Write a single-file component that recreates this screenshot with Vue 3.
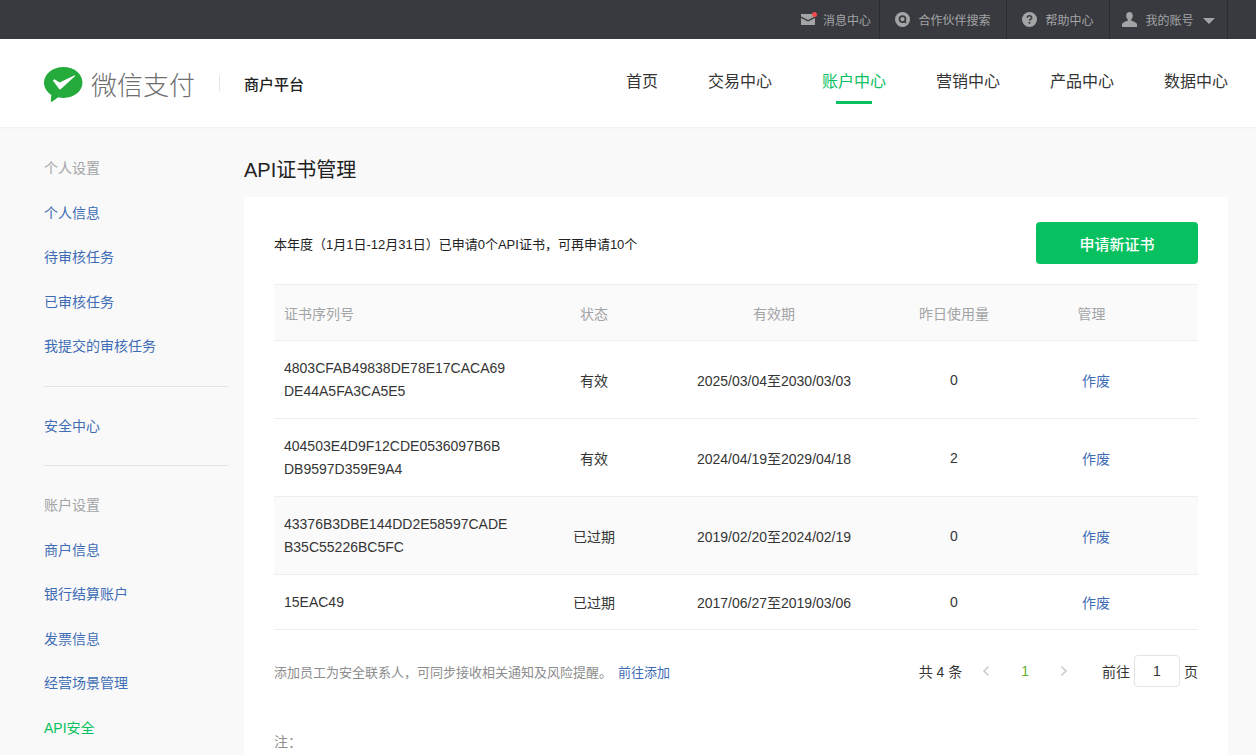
<template>
  <div class="page">
    <div class="topbar">
      <div v-for="item in topLinks" :key="item.label" class="top-link" :class="item.cls">
        <svg v-if="item.icon === 'mail'" class="top-icon mail" width="17" height="14" viewBox="0 0 17 14">
          <path d="M1 2h14v2.6L8 8 1 4.6z" fill="#a3a4a6" />
          <path d="M1 6l7 3.4L15 6v7H1z" fill="#a3a4a6" />
          <circle cx="14.5" cy="2.5" r="2.5" fill="#f4494b" />
        </svg>
        <svg v-else-if="item.icon === 'search'" class="top-icon" width="15" height="15" viewBox="0 0 15 15">
          <circle cx="7.5" cy="7.5" r="7.5" fill="#a3a4a6" />
          <circle cx="7.5" cy="7.2" r="3" fill="none" stroke="#393a3f" stroke-width="1.7" />
          <path d="M9.5 9.3l1.6 1.6" stroke="#393a3f" stroke-width="1.4" />
        </svg>
        <svg v-else-if="item.icon === 'help'" class="top-icon" width="15" height="15" viewBox="0 0 15 15">
          <circle cx="7.5" cy="7.5" r="7.5" fill="#a3a4a6" />
          <path d="M5.3 5.8c0-1.3 1-2.1 2.2-2.1s2.2.8 2.2 2c0 1.500-2.100 1.500-2.100 3.100" fill="none" stroke="#393a3f" stroke-width="1.500" />
          <rect x="6.600" y="10" width="1.700" height="1.700" fill="#393a3f" />
        </svg>
        <svg v-else class="top-icon" width="15" height="15" viewBox="0 0 15 15">
          <path d="M7.500 0c2.100 0 3.300 1.600 3.300 3.700 0 1.500-.6 2.800-1.500 3.600v1.400c2 .8 5.200 1.500 5.700 3.300v3H0v-3c.5-1.800 3.700-2.500 5.700-3.300V7.300C4.800 6.500 4.200 5.200 4.200 3.700 4.200 1.600 5.400 0 7.500 0z" fill="#a3a4a6" />
        </svg>
        <span>{{ item.label }}</span>
        <i v-if="item.caret" class="caret"></i>
      </div>
    </div>

    <header class="header">
      <div class="brand">
        <svg class="logo" width="39" height="35" viewBox="0 0 39 35">
          <path d="M19.500 0C30 0 38.500 6.800 38.500 15.600S30 31 19.500 31c-2 0-3.600-.2-5.300-.7L8 34.800c-.7.300-1.300-.1-1.200-.9l.5-5.900C2.800 25.200 0 20.700 0 15.600 0 6.800 9 0 19.500 0z" fill="#25ab3c" />
          <path d="M8.800 13.500l1.600-1.300 5.300 3.300L30.600 8.200l.6.800-14.300 13.100c-.6.500-1.300.4-1.700-.2z" fill="#fff" />
        </svg>
        <span class="brand-name">微信支付</span>
        <span class="brand-sep"></span>
        <span class="brand-sub">商户平台</span>
      </div>
      <nav class="nav">
        <a v-for="n in navs" :key="n" class="nav-item" :class="{ active: n === '账户中心' }">{{ n }}</a>
      </nav>
    </header>

    <div class="body">
      <aside class="side">
        <template v-for="(s, i) in sideItems" :key="i">
          <div v-if="s.type === 'line'" class="side-line"></div>
          <div v-else class="side-item" :class="s.type">{{ s.label }}</div>
        </template>
      </aside>

      <main class="main">
        <h1 class="title">API证书管理</h1>
        <section class="card">
          <div class="summary">
            <span>本年度（1月1日-12月31日）已申请0个API证书，可再申请10个</span>
            <button class="apply" type="button">申请新证书</button>
          </div>

          <div class="table">
            <div class="row head">
              <div class="c-sn">证书序列号</div>
              <div class="c-state">状态</div>
              <div class="c-date">有效期</div>
              <div class="c-num">昨日使用量</div>
              <div class="c-head-op">管理</div>
            </div>
            <div v-for="r in certs" :key="r.sn" class="row" :class="{ tall: r.sn.length > 10, expired: r.shade }">
              <div class="c-sn sn">{{ r.sn }}</div>
              <div class="c-state">{{ r.state }}</div>
              <div class="c-date">{{ r.date }}</div>
              <div class="c-num">{{ r.used }}</div>
              <div class="c-op"><a class="link">作废</a></div>
            </div>
          </div>

          <div class="foot">
            <div class="tip">添加员工为安全联系人，可同步接收相关通知及风险提醒。<a class="link add">前往添加</a></div>
            <div class="pager">
              <span class="total">共 4 条</span>
              <svg class="arrow" width="8" height="12" viewBox="0 0 8 12"><path d="M6.500 1.500L2 6l4.500 4.500" fill="none" stroke="#ccc" stroke-width="1.600" /></svg>
              <span class="cur">1</span>
              <svg class="arrow next" width="8" height="12" viewBox="0 0 8 12"><path d="M1.500 1.500L6 6l-4.500 4.500" fill="none" stroke="#ccc" stroke-width="1.600" /></svg>
              <span class="goto">前往</span>
              <span class="page-box">1</span>
              <span>页</span>
            </div>
          </div>

          <div class="note">注：</div>
        </section>
      </main>
    </div>
  </div>
</template>

<script setup>
const topLinks = [
  { label: "消息中心", icon: "mail", cls: "w-msg" },
  { label: "合作伙伴搜索", icon: "search", cls: "w-search" },
  { label: "帮助中心", icon: "help", cls: "w-help" },
  { label: "我的账号", icon: "user", cls: "w-user", caret: true },
];

const navs = ["首页", "交易中心", "账户中心", "营销中心", "产品中心", "数据中心"];

const sideItems = [
  { type: "group", label: "个人设置" },
  { type: "link", label: "个人信息" },
  { type: "link", label: "待审核任务" },
  { type: "link", label: "已审核任务" },
  { type: "link", label: "我提交的审核任务" },
  { type: "line" },
  { type: "link", label: "安全中心" },
  { type: "line" },
  { type: "group", label: "账户设置" },
  { type: "link", label: "商户信息" },
  { type: "link", label: "银行结算账户" },
  { type: "link", label: "发票信息" },
  { type: "link", label: "经营场景管理" },
  { type: "current", label: "API安全" },
];

const certs = [
  { sn: "4803CFAB49838DE78E17CACA69DE44A5FA3CA5E5", state: "有效", date: "2025/03/04至2030/03/03", used: 0 },
  { sn: "404503E4D9F12CDE0536097B6BDB9597D359E9A4", state: "有效", date: "2024/04/19至2029/04/18", used: 2 },
  { sn: "43376B3DBE144DD2E58597CADEB35C55226BC5FC", state: "已过期", date: "2019/02/20至2024/02/19", used: 0, shade: true },
  { sn: "15EAC49", state: "已过期", date: "2017/06/27至2019/03/06", used: 0 },
];
</script>

<style>
html, body {
  margin: 0;
  height: 755px;
  overflow: hidden;
  background: #f9f9f9;
}
</style>

<style scoped>
.page {
  font-family: "Liberation Sans", "Noto Sans CJK SC", sans-serif;
  font-size: 14px;
  color: #353535;
  background: #f9f9f9;
  height: 755px;
  overflow: hidden;
}
a { cursor: pointer; }

.topbar {
  height: 39px;
  background: #393a3f;
  display: flex;
  justify-content: flex-end;
  padding-right: 28px;
  color: #a3a4a6;
  font-size: 12px;
}
.top-link {
  display: flex;
  align-items: center;
  justify-content: center;
  border-right: 1px solid #2b2c30;
  box-sizing: border-box;
}
.top-link.w-msg { width: 88px; padding-left: 0; }
.top-link.w-search { width: 127px; }
.top-link.w-help { width: 103px; }
.top-link.w-user { width: 118px; }
.top-icon { margin-right: 8px; }
.top-icon.mail { margin-top: -2px; margin-right: 6px; }
.caret {
  width: 0;
  height: 0;
  margin-left: 9px;
  margin-top: 2px;
  border-left: 6px solid transparent;
  border-right: 6px solid transparent;
  border-top: 6px solid #a3a4a6;
}

.header {
  height: 88px;
  background: #fff;
  display: flex;
  align-items: center;
  justify-content: space-between;
  padding: 0 28px 0 44px;
  box-shadow: 0 1px 2px rgba(0, 0, 0, 0.04);
  position: relative;
}
.brand { display: flex; align-items: center; }
.logo { margin-top: 2px; }
.brand-name {
  margin-left: 8px;
  font-size: 26px;
  color: #6e6e6e;
  font-weight: 300;
  letter-spacing: 0;
}
.brand-sep {
  width: 1px;
  height: 16px;
  margin: 0 24px;
  background: #e6e6e6;
}
.brand-sub { font-size: 15px; color: #222; font-weight: 500; }
.nav { display: flex; gap: 50px; }
.nav-item {
  font-size: 16px;
  color: #353535;
  height: 88px;
  line-height: 86px;
  position: relative;
}
.nav-item.active { color: #07c160; }
.nav-item.active::after {
  content: "";
  position: absolute;
  left: 14px;
  right: 14px;
  bottom: 23px;
  height: 3px;
  background: #07c160;
}

.body { display: flex; }
.side { width: 184px; margin: 19px 16px 0 44px; flex: none; }
.side-item { height: 44.500px; line-height: 44.500px; color: #353535; }
.side-item.group { color: #a3a4a6; }
.side-item.current { color: #07c160; }
.side-line { height: 1px; background: #e4e4e4; margin: 17px 0 17px; }

.main { width: 984px; }
.title {
  margin: 0;
  padding-top: 28px;
  height: 42px;
  line-height: 30px;
  font-size: 20px;
  font-weight: 400;
  color: #222;
}
.card {
  background: #fff;
  border-radius: 4px;
  padding: 25px 30px 0;
  height: 600px;
}
.summary {
  display: flex;
  align-items: center;
  justify-content: space-between;
  height: 42px;
  font-size: 13px;
  color: #222;
}
.apply {
  width: 162px;
  height: 42px;
  border: 0;
  border-radius: 4px;
  background: #07c160;
  color: #fff;
  font: inherit;
  font-size: 15px;
  font-weight: 500;
}

.table { margin-top: 20px; border-top: 1px solid #eee; }
.row {
  display: grid;
  grid-template-columns: 280px 80px 280px 80px 1fr;
  align-items: center;
  min-height: 54px;
  border-bottom: 1px solid #eee;
  text-align: center;
}
.row.tall { min-height: 77px; }
.row.expired { background: #fafafa; }
.row.head { height: 55px; background: #fafafa; color: #a3a4a6; }
.c-sn { text-align: left; padding-left: 10px; }
.sn { width: 225px; word-break: break-all; line-height: 23px; }
.c-head-op { padding-right: 9px; }
.c-op { padding-left: 0; }
.link { color: #3f6db5; }

.foot {
  display: flex;
  justify-content: space-between;
  align-items: center;
  margin-top: 25px;
  height: 32px;
}
.tip { color: #8d8d8d; font-size: 13px; }
.add { margin-left: 6px; }
.pager { display: flex; align-items: center; }
.total { margin-right: 20px; }
.arrow { margin-right: 31px; }
.cur { color: #65b32e; margin-right: 31px; }
.arrow.next { margin-right: 34px; }
.page-box {
  width: 44px;
  height: 30px;
  margin: 0 4px 0 4px;
  border: 1px solid #e4e4e4;
  border-radius: 4px;
  text-align: center;
  line-height: 30px;
}
.note { margin-top: 44px; color: #8d8d8d; }
</style>
